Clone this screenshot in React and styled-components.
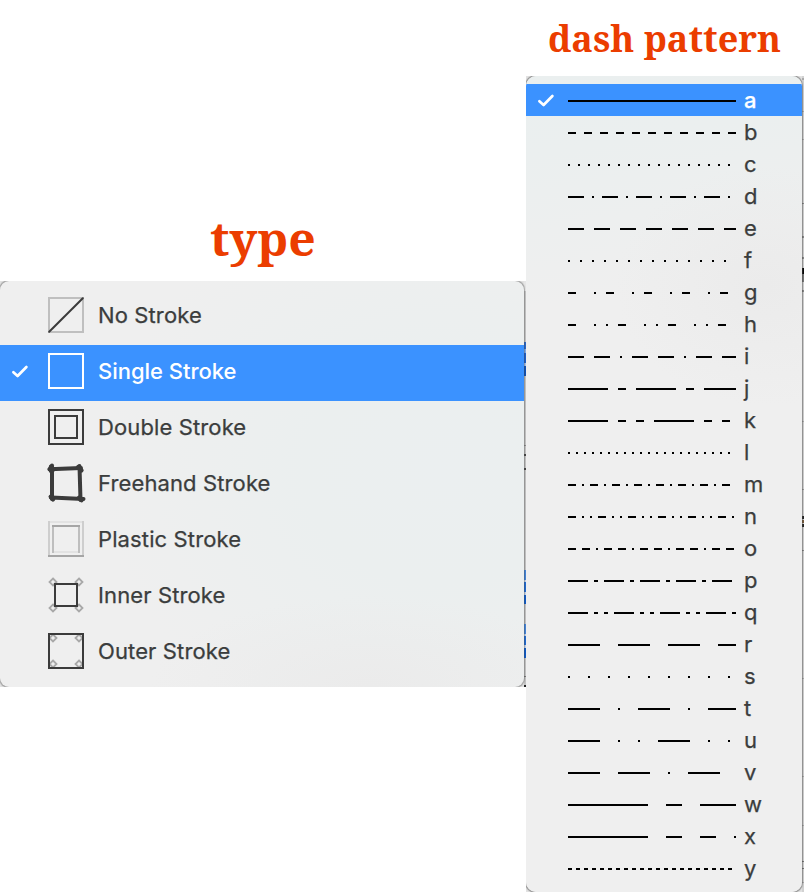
import React from "react";
import styled, { createGlobalStyle } from "styled-components";

const GlobalStyle = createGlobalStyle`
  html, body { margin: 0; padding: 0; background: #fff; }
  body { width: 804px; height: 892px; overflow: hidden; }
  *, *::before, *::after { box-sizing: border-box; }
`;

const Page = styled.main`
  display: grid;
  grid-template-columns: 526px 278px;
  width: 804px;
  height: 892px;
  overflow: hidden;
  background: #fff;
  color: #3b3d3d;
  font-family: Inter, "Liberation Sans", sans-serif;
`;

const Column = styled.section`
  display: flex;
  flex-direction: column;
  min-width: 0;
`;

const Heading = styled.h2`
  margin: 0;
  height: ${(p) => p.$height}px;
  padding: ${(p) => p.$top}px 0 0 ${(p) => p.$left}px;
  color: #eb3d00;
  font: 700 ${(p) => p.$size}px/60px "Noto Serif", "Droid Serif", "DejaVu Serif", serif;
  white-space: nowrap;
`;

const Frame = styled.div`
  display: flex;
  height: ${(p) => p.$height}px;
  overflow: hidden;
  background: ${(p) => p.$edge} right top / 2px 100% no-repeat, #e2e2e2;
`;

const TypeMenu = styled.ul`
  margin: 0;
  padding: 8px 0 6px;
  width: 524px;
  height: 406px;
  list-style: none;
  overflow: hidden;
  border-radius: 9px;
  box-shadow: 0 0 1px 0.5px rgba(70, 70, 70, 0.4);
  background:
    radial-gradient(ellipse 220px 90px at 370px 405px, #ebebeb 0%, rgba(235, 235, 235, 0) 100%),
    radial-gradient(ellipse 340px 280px at 440px 190px, #ebeff0 0%, #ebefef 40%, rgba(239, 239, 239, 0) 100%),
    #efefef;
`;

const DashMenu = styled.ul`
  margin: 0;
  padding: 8px 0 7px;
  width: 276px;
  height: 816px;
  list-style: none;
  overflow: hidden;
  border-radius: 10px;
  box-shadow: 0 0 1px 0.5px rgba(70, 70, 70, 0.5);
  background:
    radial-gradient(ellipse 150px 120px at 240px 210px, #ebebeb 0%, rgba(235, 235, 235, 0) 100%),
    linear-gradient(170deg, #eaefef 0px, #ebefef 80px, #efefef 230px);
`;

const Row = styled.li`
  display: flex;
  align-items: center;
  height: ${(p) => p.$height}px;
  padding-bottom: ${(p) => p.$lift || 0}px;
  background: ${(p) => (p.$selected ? "#3b92ff" : "transparent")};
  color: ${(p) => (p.$selected ? "#fff" : "inherit")};
`;

const CheckSlot = styled.span`
  display: flex;
  flex: none;
  width: ${(p) => p.$width}px;
  padding-left: ${(p) => p.$left}px;
`;

const Icon = styled.svg`
  display: block;
  flex: none;
  overflow: visible;
`;

const Label = styled.span`
  margin-left: 14px;
  font-size: 22px;
  line-height: 30px;
  font-weight: ${(p) => (p.$selected ? 500 : 400)};
  letter-spacing: ${(p) => (p.$selected ? -0.03 : 0.12)}px;
  -webkit-text-stroke: ${(p) => (p.$selected ? 0 : 0.25)}px currentColor;
  white-space: nowrap;
`;

const Letter = styled.span`
  margin-left: 8px;
  font-size: 22px;
  line-height: 30px;
  font-weight: ${(p) => (p.$selected ? 500 : 400)};
  -webkit-text-stroke: 0.25px currentColor;
`;

const Check = () => (
  <Icon width="17" height="14" viewBox="0 0 17 14" fill="none" stroke="#fff" strokeWidth="2.7" strokeLinecap="round" strokeLinejoin="round">
    <path d="M2.4 8.2 6.6 12 15.4 3" />
  </Icon>
);

const Diamonds = ({ near, far }) =>
  [[near, near], [far, near], [near, far], [far, far]].map(([x, y]) => (
    <path key={`${x}-${y}`} d={`M${x} ${y - 3.5}l3.5 3.5-3.5 3.5-3.5-3.5z`} stroke="#a9a9a9" strokeWidth="1.8" />
  ));

const drawings = {
  none: (
    <>
      <rect x="1" y="1" width="34" height="34" stroke="#bfbfbf" strokeWidth="2" />
      <path d="M1.2 34.8 34.8 1.2" stroke="#3b3b3b" strokeWidth="2" strokeLinecap="round" />
    </>
  ),
  single: <rect x="1" y="1" width="34" height="34" stroke="#fff" strokeWidth="2" />,
  double: (
    <g stroke="#3b3b3b" strokeWidth="2">
      <rect x="1" y="1" width="34" height="34" />
      <rect x="7" y="7" width="22" height="22" />
    </g>
  ),
  freehand: (
    <g stroke="#3b3b3b" strokeWidth="4" strokeLinecap="round">
      <path d="M1.5 4.2 33 3" />
      <path d="M4 .5v33.5" />
      <path d="M31.5 1 32.5 35" />
      <path d="M3 32.5 35.5 34" />
      <path d="M3 1.8v4M1.8 4.2h4M30.2 2.2l3.2 3.2M2.8 31.8l2.2 2.5M31 33l2.5 2" strokeWidth="4.5" />
    </g>
  ),
  plastic: (
    <g strokeWidth="2">
      <path d="M0 1h36" stroke="#e2e2e2" />
      <path d="M1 0v34M35 0v34" stroke="#cecece" />
      <path d="M0 35h36" stroke="#a5a5a5" />
      <path d="M6 31h24" stroke="#e2e2e2" />
      <path d="M5 4v28M31 4v28" stroke="#bebebe" />
      <path d="M4 5h28" stroke="#a5a5a5" />
    </g>
  ),
  inner: (
    <>
      <Diamonds near={5} far={31} />
      <rect x="7" y="7" width="22" height="22" stroke="#3b3b3b" strokeWidth="2" fill="#efefef" />
    </>
  ),
  outer: (
    <>
      <Diamonds near={5} far={31} />
      <rect x="1" y="1" width="34" height="34" stroke="#3b3b3b" strokeWidth="2" />
    </>
  ),
};

const types = [
  ["none", "No Stroke"],
  ["single", "Single Stroke"],
  ["double", "Double Stroke"],
  ["freehand", "Freehand Stroke"],
  ["plastic", "Plastic Stroke"],
  ["inner", "Inner Stroke"],
  ["outer", "Outer Stroke"],
];

const patterns = {
  a: "none",
  b: "8 8",
  c: "2 8",
  d: "16 8 2 8",
  e: "16 10",
  f: "2 10",
  g: "8 18 2 10",
  h: "8 18 2 10 2 10",
  i: "16 10 16 10 2 10",
  j: "40 10 8 10",
  k: "40 10 8 10 8 10",
  l: "2 6",
  m: "8 6 2 6",
  n: "8 6 2 6 2 6",
  o: "8 6 8 6 2 6",
  p: "20 6 4 6",
  q: "20 6 4 6 4 6",
  r: "32 18",
  s: "2 18",
  t: "32 18 2 18",
  u: "32 18 2 18 2 18",
  v: "32 18 32 18 2 18",
  w: "80 18 16 18",
  x: "80 18 16 18 16 18",
  y: "4 4",
};

/* Builds a hard-stop vertical gradient from [start, end, colour] bands. */
const bands = (base, list) => {
  const stops = [];
  let at = 0;
  list.forEach(([from, to, color]) => {
    stops.push(`${base} ${at}px ${from}px`, `${color} ${from}px ${to}px`);
    at = to;
  });
  stops.push(`${base} ${at}px`);
  return `linear-gradient(${stops.join(", ")})`;
};

const typeEdge = bands("#c4c4c4", [
  [0, 10, "#e6e6e6"],
  [61, 68, "#2866c8"], [68, 72, "#7fa9e6"], [72, 82, "#1d5fca"], [82, 85, "#a9c3eb"], [85, 95, "#0d51b8"],
  [164, 165, "#8c8c8c"], [173, 175, "#444"], [187, 189, "#444"],
  [289, 299, "#4386dc"], [299, 301, "#c5d5ec"], [301, 311, "#1e6bd5"], [311, 314, "#c5d5ec"], [314, 323, "#0b5bcd"],
  [343, 353, "#4386dc"], [353, 355, "#c5d5ec"], [355, 364, "#1e6bd5"], [364, 367, "#c5d5ec"], [367, 377, "#0b5bcd"],
  [395, 396, "#777"], [404, 406, "#222"],
]);

const dashEdge = bands("#d2d2d2", [
  [2, 4, "#aaa"], [35, 36, "#aaa"], [63, 64, "#aaa"], [127, 128, "#888"], [160, 162, "#888"], [181, 183, "#888"],
  [192, 198, "#050505"], [198, 206, "#777"], [214, 216, "#888"], [345, 346, "#aaa"], [413, 414, "#999"],
  [440, 443, "#222"], [444, 447, "#7b5b3a"], [448, 451, "#222"], [474, 475, "#888"],
  [602, 603, "#aaa"], [700, 701, "#aaa"], [749, 750, "#aaa"], [785, 786, "#777"], [792, 793, "#777"], [806, 807, "#aaa"],
]);

export default function App() {
  return (
    <>
      <GlobalStyle />
      <Page>
        <Column>
          <Heading $height={281} $top={208} $left={210} $size={48}>type</Heading>
          <Frame $height={406} $edge={typeEdge}>
            <TypeMenu>
              {types.map(([id, label]) => {
                const selected = id === "single";
                return (
                  <Row key={id} $height={56} $lift={4} $selected={selected}>
                    <CheckSlot $width={48} $left={11}>{selected && <Check />}</CheckSlot>
                    <Icon width="36" height="36" viewBox="0 0 36 36" fill="none">{drawings[id]}</Icon>
                    <Label $selected={selected}>{label}</Label>
                  </Row>
                );
              })}
            </TypeMenu>
          </Frame>
        </Column>
        <Column>
          <Heading $height={76} $top={9} $left={22} $size={36}>dash pattern</Heading>
          <Frame $height={816} $edge={dashEdge}>
            <DashMenu>
              {Object.entries(patterns).map(([letter, dashes]) => {
                const selected = letter === "a";
                return (
                  <Row key={letter} $height={32} $selected={selected}>
                    <CheckSlot $width={42} $left={11}>{selected && <Check />}</CheckSlot>
                    <Icon width="168" height="32" viewBox="0 0 168 32" shapeRendering="crispEdges">
                      <path d="M0 17h168" stroke="#000" strokeWidth="2" strokeDasharray={dashes} />
                    </Icon>
                    <Letter $selected={selected}>{letter}</Letter>
                  </Row>
                );
              })}
            </DashMenu>
          </Frame>
        </Column>
      </Page>
    </>
  );
}
